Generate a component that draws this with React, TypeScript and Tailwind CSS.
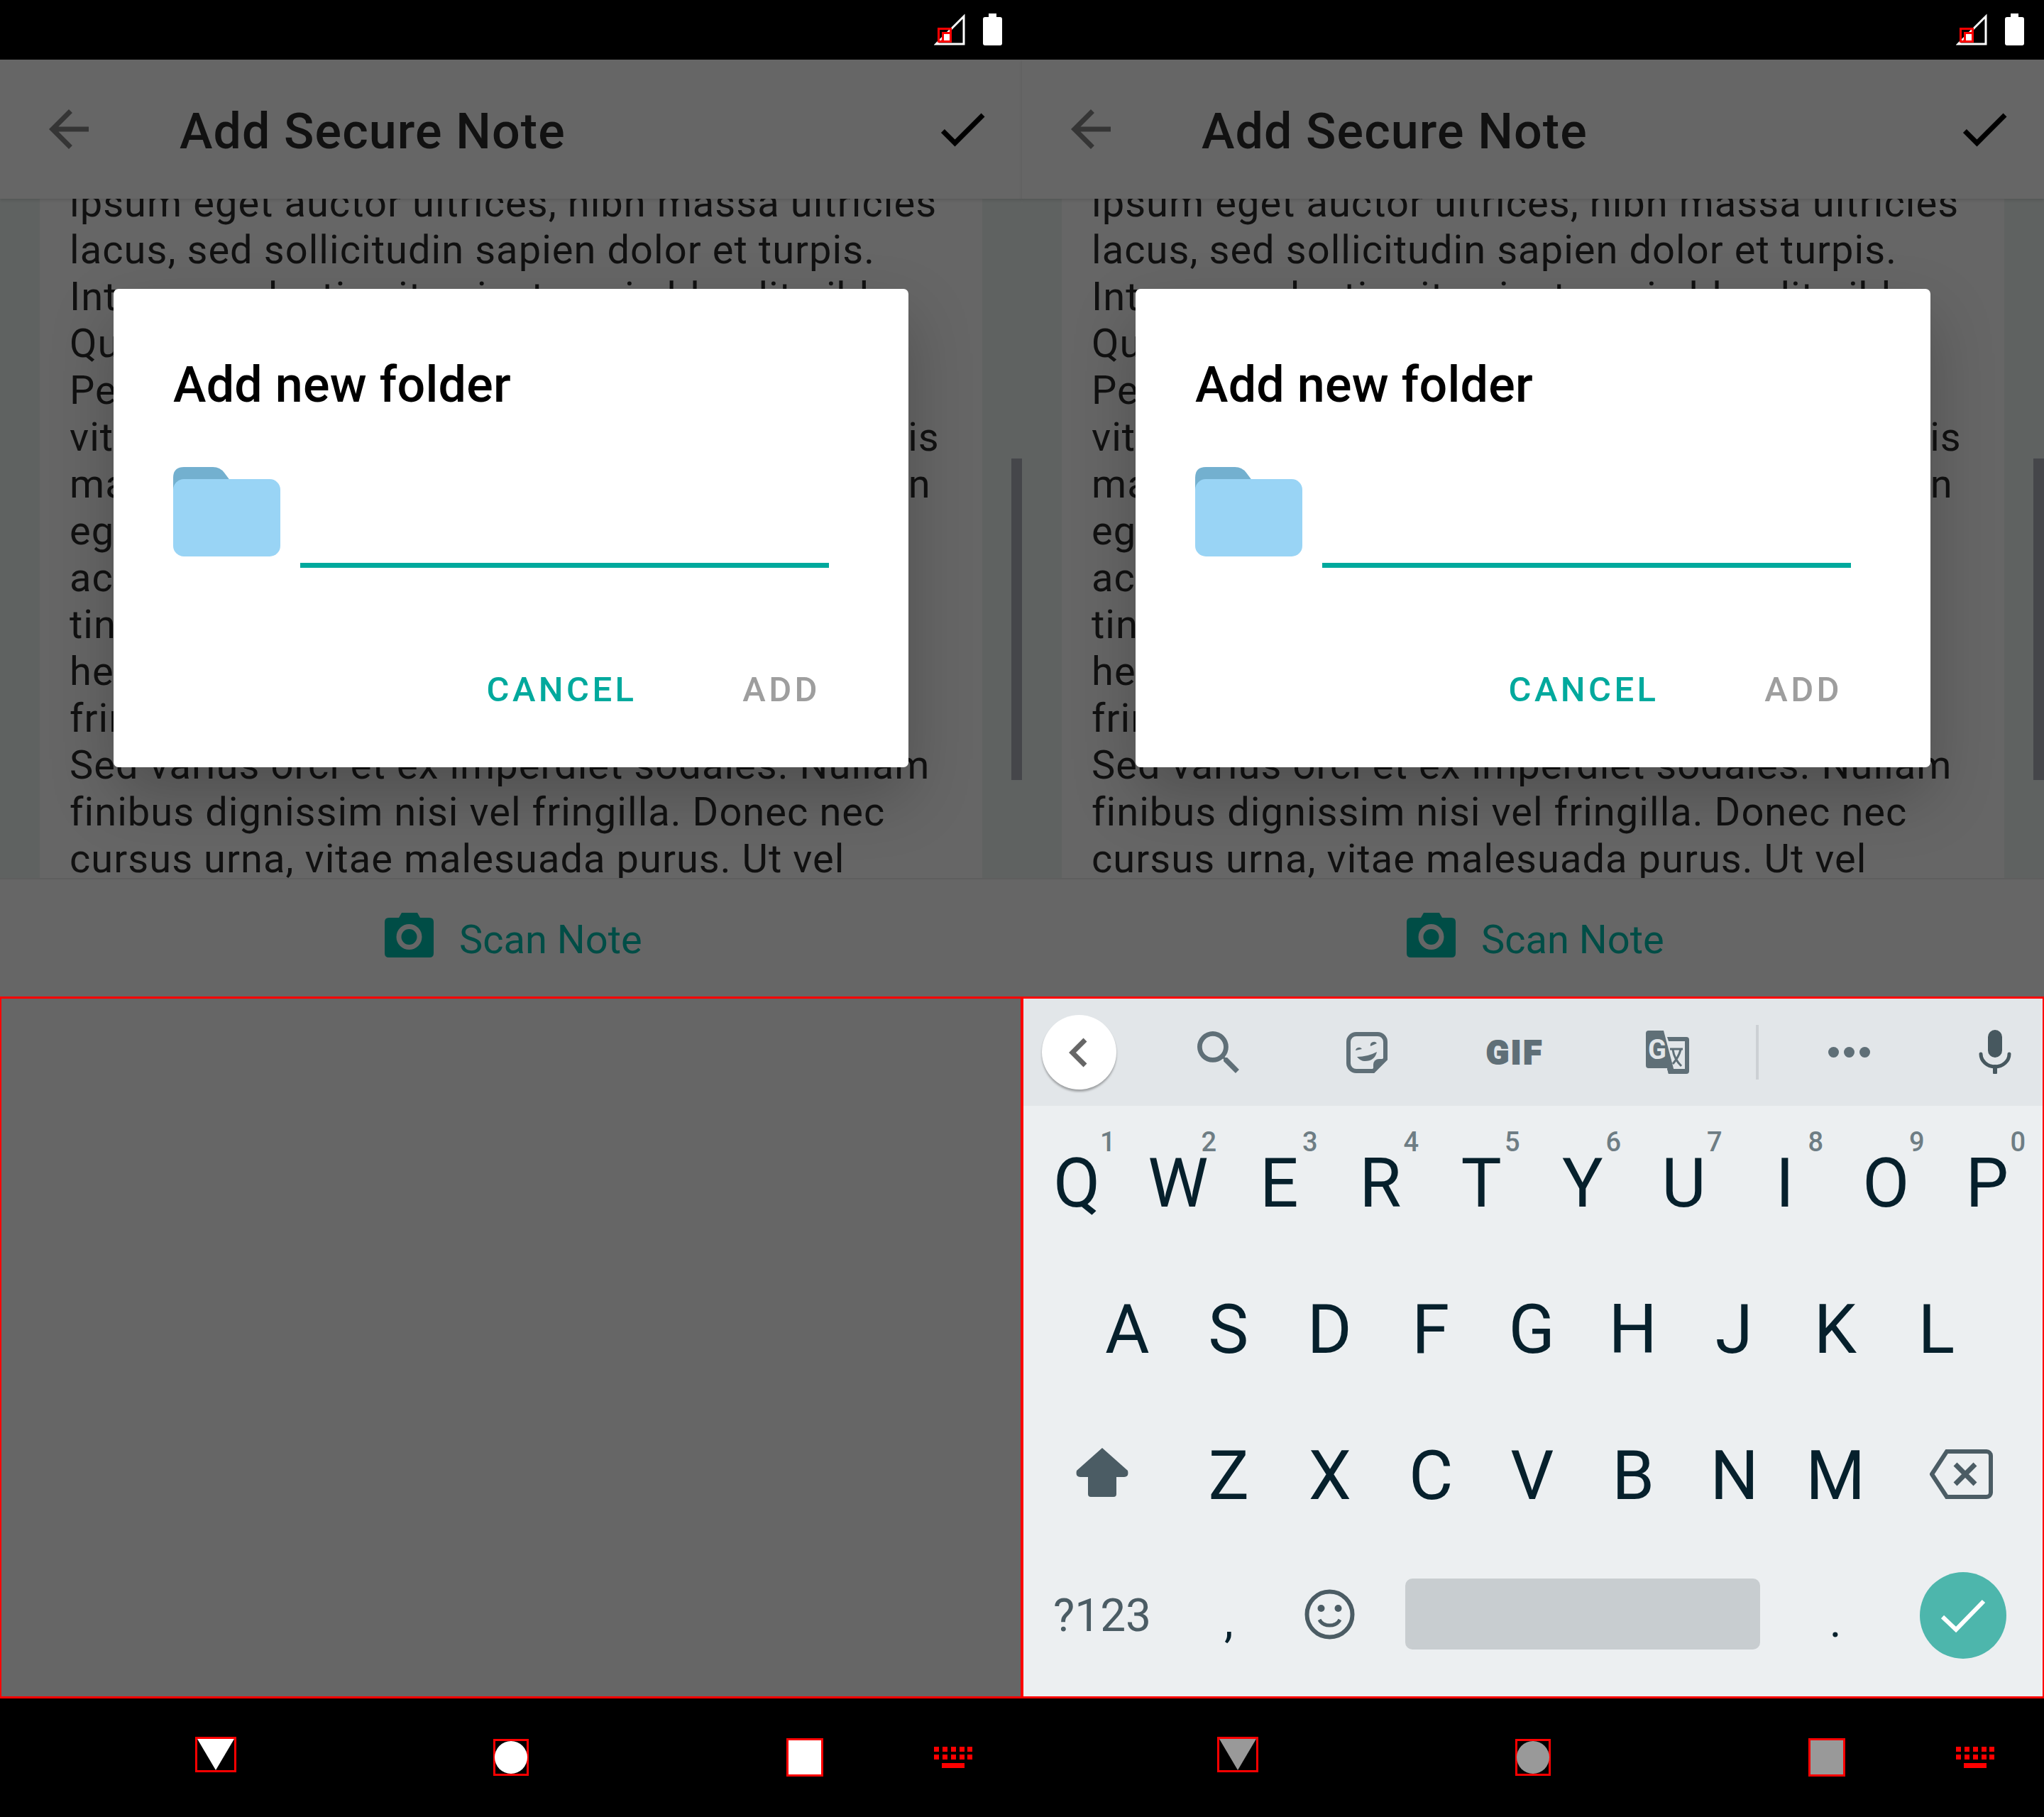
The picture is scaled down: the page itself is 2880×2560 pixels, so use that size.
const NOTE_TOP = [
  "ipsum eget auctor ultrices, nibh massa ultricies",
  "lacus, sed sollicitudin sapien dolor et turpis.",
  "Integer molestie vitae justo quis blandit nibh",
  "Quisque at tortor vel sem volutpat lobortis",
  "Pellentesque vel ligula a nunc ornare lacinia",
  "vitae sed ante tincidunt nulla mollis cursus cuis",
  "magna finibus vel lorem nec pharetra mauris in",
  "eget tempor lorem sed lacus aliquam",
  "ac sapien vehicula dictum dolor",
  "tincidunt sem at mauris ligula",
  "hendrerit nunc ac lacinia",
  "fringilla nec sapien",
  "Sed varius orci et ex imperdiet sodales. Nullam",
  "finibus dignissim nisi vel fringilla. Donec nec",
  "cursus urna, vitae malesuada purus. Ut vel",
];

const ROW_1 = ["Q", "W", "E", "R", "T", "Y", "U", "I", "O", "P"];
const HINTS = ["1", "2", "3", "4", "5", "6", "7", "8", "9", "0"];
const ROW_2 = ["A", "S", "D", "F", "G", "H", "J", "K", "L"];
const ROW_3 = ["Z", "X", "C", "V", "B", "N", "M"];

const StatusBar = () => (
  <div className="flex h-[84px] items-start bg-black pl-[1316px] pt-[19px]">
    <svg width="44" height="45" viewBox="0 0 44 45">
      <path d="M42 4V43H3Z" fill="none" stroke="#fff" strokeWidth="3" />
      <rect x="6.5" y="21.5" width="17" height="18" fill="none" stroke="#f00" strokeWidth="3" />
      <rect x="12.5" y="27.5" width="11" height="12" fill="#fff" stroke="#f00" strokeWidth="3" />
    </svg>
    <svg className="ml-[25px]" width="27" height="45" viewBox="0 0 27 45">
      <path d="M8 0H19V5H24Q27 5 27 8V42Q27 45 24 45H3Q0 45 0 42V8Q0 5 3 5H8Z" fill="#fff" />
    </svg>
  </div>
);

const AppBar = () => (
  <div className="z-10 flex h-[196px] items-center bg-[#666] pl-[55px] pr-[42px] shadow-[0_2px_4px_rgba(0,0,0,0.12)]">
    <svg width="84" height="84" viewBox="0 0 24 24" fill="#353535">
      <path d="M20 11H7.83l5.59-5.59L12 4l-8 8 8 8 1.41-1.41L7.83 13H20v-2z" />
    </svg>
    <div className="ml-[114px] mt-[5px] text-[70px] font-medium leading-none tracking-[1.1px] text-[#111]">
      Add Secure Note
    </div>
    <svg className="ml-auto" width="84" height="84" viewBox="0 0 24 24" fill="#000">
      <path d="M9 16.17L4.83 12l-1.42 1.41L9 19 21 7l-1.41-1.41z" />
    </svg>
  </div>
);

const NoteBody = () => (
  <div className="relative flex h-[957px] justify-center overflow-hidden bg-[#5f6261]">
    <div className="w-[1328px] overflow-hidden bg-[#666] pl-[42px]">
      <div className="-mt-[27px] text-[56px] leading-[66px] tracking-[1.05px] text-[#111]">
        {NOTE_TOP.map((line) => (
          <div className="whitespace-nowrap" key={line}>
            {line}
          </div>
        ))}
      </div>
    </div>
    <div className="absolute right-0 top-[366px] h-[453px] w-[15px] bg-[#45464a]" />
  </div>
);

const ScanBar = () => (
  <div className="flex h-[167px] items-start border-t-2 border-[#5e5e5e] bg-[#666] pl-[542px] pt-[47px]">
    <svg width="69" height="63" viewBox="0 0 69 63">
      <path
        d="M20 7 24 0H46L50 7H63Q69 7 69 13V57Q69 63 63 63H6Q0 63 0 57V13Q0 7 6 7Z"
        fill="#004d46"
      />
      <circle cx="34.5" cy="34" r="18" fill="#666" />
      <circle cx="34.5" cy="34" r="11" fill="#004d46" />
    </svg>
    <div className="ml-[36px] mt-[5px] text-[56px] leading-[66px] text-[#004d46]">Scan Note</div>
  </div>
);

const FolderDialog = () => (
  <div className="absolute left-[160px] top-[407px] z-20 h-[674px] w-[1120px] rounded-[7px] bg-white pl-[84px] pt-[94px] shadow-[0_40px_90px_rgba(0,0,0,0.22)]">
    <div className="text-[70px] font-medium leading-[82px] tracking-[0.25px] text-black">Add new folder</div>
    <div className="mt-[75px] flex">
      <svg width="151" height="126" viewBox="0 0 151 126">
        <path d="M0 30V15Q0 0 15 0H56Q66 0 72 8L84 24V40H0Z" fill="#73b0cf" />
        <rect y="17" width="151" height="109" rx="15" fill="#99d4f5" />
      </svg>
      <div className="ml-[28px] mt-[135px] h-[7px] w-[745px] bg-[#00a99d]" />
    </div>
    <div className="mt-[147px] flex justify-end gap-[149px] pr-[124px] text-[49px] font-medium leading-[50px] tracking-[4.4px]">
      <span className="text-[#00a99d]">CANCEL</span>
      <span className="text-[#9e9e9e]">ADD</span>
    </div>
  </div>
);

const SuggestionBar = () => (
  <div className="flex h-[151px] items-center bg-[#e2e6e9] pl-[26px]">
    <div className="flex h-[105px] w-[105px] items-center justify-center rounded-full bg-white shadow-[0_3px_3px_rgba(0,0,0,0.3)]">
      <svg className="-ml-[4px]" width="28" height="42" viewBox="0 0 28 42">
        <path d="M24 3 6 21 24 39" fill="none" stroke="#666" strokeWidth="7" />
      </svg>
    </div>
    <svg className="ml-[114px]" width="59" height="59" viewBox="3 3 17.5 17.5" fill="#5f6f77">
      <path d="M15.5 14h-.79l-.28-.27A6.47 6.47 0 0 0 16 9.5 6.5 6.5 0 1 0 9.5 16c1.61 0 3.09-.59 4.23-1.57l.27.28v.79l5 4.99L20.49 19l-4.99-5zm-6 0C7.01 14 5 11.99 5 9.5S7.01 5 9.5 5 14 7.01 14 9.5 11.99 14 9.5 14z" />
    </svg>
    <svg className="ml-[151px]" width="58" height="58" viewBox="0 0 58 58">
      <path
        d="M14 3H44A11 11 0 0 1 55 14V38L38 55H14A11 11 0 0 1 3 44V14A11 11 0 0 1 14 3Z"
        fill="none"
        stroke="#5f6f77"
        strokeWidth="6"
      />
      <path d="M38 55V46A8 8 0 0 1 46 38H55Z" fill="#5f6f77" />
      <path d="M13 26A5 5 0 0 1 22 24ZM34 20A5 5 0 0 1 43 16Z" fill="#5f6f77" />
      <path d="M15 35Q30 35 43 28Q40 41 26 41Q20 41 15 35Z" fill="#5f6f77" />
    </svg>
    <div className="ml-[139px] w-[80px] whitespace-nowrap text-center text-[47px] font-black leading-none tracking-[3px] text-[#5f6f77] [-webkit-text-stroke:2px_#5f6f77]">
      GIF
    </div>
    <svg className="ml-[145px]" width="61" height="61" viewBox="0 0 61 61">
      <path d="M30 9H57Q61 9 61 13V57Q61 61 57 61H32L30 54H55V15H32Z" fill="#5f6f77" />
      <path d="M4 0H25L41 61H32L30 53H4Q0 53 0 49V4Q0 0 4 0Z" fill="#5f6f77" />
      <text x="3" y="40" fill="#e2e6e9" fontSize="38" fontWeight="700" fontFamily="Roboto, sans-serif">
        G
      </text>
      <path d="M34 26H52M38 27Q40 40 50 50M49 27Q46 38 38 47" fill="none" stroke="#5f6f77" strokeWidth="3" />
    </svg>
    <div className="ml-[94px] h-[77px] w-[4px] bg-[#ccd0d4]" />
    <div className="ml-[98px] flex gap-[7px]">
      <div className="h-[15px] w-[15px] rounded-full bg-[#5f6f77]" />
      <div className="h-[15px] w-[15px] rounded-full bg-[#5f6f77]" />
      <div className="h-[15px] w-[15px] rounded-full bg-[#5f6f77]" />
    </div>
    <svg className="ml-[153px] -mt-[1px]" width="46" height="62" viewBox="0 0 46 62">
      <rect x="13" y="0" width="20" height="39" rx="10" fill="#47585f" />
      <path d="M3 34A20 18 0 0 0 43 34" fill="none" stroke="#47585f" strokeWidth="5" strokeLinecap="round" />
      <path d="M23 52V60" fill="none" stroke="#47585f" strokeWidth="6" strokeLinecap="round" />
    </svg>
  </div>
);

const Key = ({ label, hint }: { label: string; hint?: string }) => (
  <div className="relative flex w-[142.5px] items-center justify-center text-[96px] leading-none text-[#06202c]">
    {label}
    {hint ? (
      <span className="absolute right-[17px] top-[26px] text-[38px] font-medium leading-[38px] text-[#6e7d84]">
        {hint}
      </span>
    ) : null}
  </div>
);

const Keyboard = () => (
  <div className="h-full bg-[#eceff1]">
    <SuggestionBar />
    <div className="pl-[4px] pt-[6px]">
      <div className="flex h-[206px]">
        {ROW_1.map((k, i) => (
          <Key label={k} hint={HINTS[i]} key={k} />
        ))}
      </div>
      <div className="flex h-[206px] pl-[71px]">
        {ROW_2.map((k) => (
          <Key label={k} key={k} />
        ))}
      </div>
      <div className="flex h-[206px]">
        <div className="flex w-[214px] items-center justify-center">
          <svg className="-mt-[9px]" width="74" height="69" viewBox="0 0 74 69" fill="#4b5c64">
            <path d="M37 0 73 32Q75 41 68 41H57V65Q57 69 53 69H21Q17 69 17 65V41H6Q-1 41 1 32Z" />
          </svg>
        </div>
        {ROW_3.map((k) => (
          <Key label={k} key={k} />
        ))}
        <div className="flex w-[211px] items-center justify-center">
          <svg className="-mt-[4px]" width="89" height="70" viewBox="0 0 89 70">
            <path
              d="M24 3H80A6 6 0 0 1 86 9V61A6 6 0 0 1 80 67H24L3 35Z"
              fill="none"
              stroke="#4b5c64"
              strokeWidth="6"
            />
            <path d="M36 21 64 49M64 21 36 49" fill="none" stroke="#4b5c64" strokeWidth="7" />
          </svg>
        </div>
      </div>
      <div className="-mt-[2px] flex h-[190px] items-center">
        <div className="w-[214px] pt-[3px] text-center text-[64px] leading-none text-[#4b5c64]">?123</div>
        <div className="w-[142.5px] pt-[20px] text-center text-[64px] leading-none text-[#06202c]">,</div>
        <div className="flex w-[142.5px] justify-center">
          <svg className="-mt-[1px]" width="71" height="71" viewBox="0 0 71 71">
            <circle cx="35.5" cy="35.5" r="32" fill="none" stroke="#4b5c64" strokeWidth="6" />
            <circle cx="23.5" cy="27" r="5" fill="#4b5c64" />
            <circle cx="47.5" cy="27" r="5" fill="#4b5c64" />
            <path d="M21 43A16 14 0 0 0 50 43" fill="none" stroke="#4b5c64" strokeWidth="5" />
          </svg>
        </div>
        <div className="flex w-[570px] justify-center">
          <div className="-mt-[2px] h-[100px] w-[500px] rounded-[10px] bg-[#c8cdd0]" />
        </div>
        <div className="w-[142.5px] pt-[20px] text-center text-[64px] leading-none text-[#06202c]">.</div>
        <div className="flex w-[217px] justify-center">
          <div className="mt-[2px] flex h-[122px] w-[122px] items-center justify-center rounded-full bg-[#4db6ac]">
            <svg width="64" height="48" viewBox="0 0 64 48">
              <path d="M3 26 22 44 61 4" fill="none" stroke="#fff" strokeWidth="6" />
            </svg>
          </div>
        </div>
      </div>
    </div>
  </div>
);

const NavBar = ({ fill }: { fill: string }) => (
  <div className="flex h-[167px] items-start bg-black pl-[275px]">
    <svg className="mt-[54px]" width="58" height="50" viewBox="0 0 58 50">
      <rect x="1.5" y="1.5" width="55" height="47" fill="none" stroke="#f00" strokeWidth="3" />
      <path d="M3 3H55L29 47Z" fill={fill} />
    </svg>
    <svg className="ml-[362px] mt-[57px]" width="50" height="52" viewBox="0 0 50 52">
      <rect x="1.5" y="1.5" width="47" height="49" fill="none" stroke="#f00" strokeWidth="3" />
      <circle cx="25" cy="26" r="23" fill={fill} />
    </svg>
    <svg className="ml-[363px] mt-[56px]" width="52" height="54" viewBox="0 0 52 54">
      <rect x="1.5" y="1.5" width="49" height="51" fill={fill} stroke="#f00" strokeWidth="3" />
    </svg>
    <svg className="ml-[156px] mt-[68px]" width="54" height="30" viewBox="0 0 54 30" fill="#f00">
      <path d="M0 0h7v7H0zM12 0h7v7h-7zM24 0h7v7h-7zM36 0h7v7h-7zM47 0h7v7h-7zM0 11h7v7H0zM12 11h7v7h-7zM24 11h7v7h-7zM36 11h7v7h-7zM47 11h7v7h-7zM11 23h32v7H11z" />
    </svg>
  </div>
);

const Panel = ({ keyboard }: { keyboard?: boolean }) => (
  <div className="relative flex h-[2560px] w-[1440px] flex-col">
    <StatusBar />
    <AppBar />
    <NoteBody />
    <ScanBar />
    <div className="h-[989px] overflow-hidden border-x-2 border-y-[3px] border-[#f00] bg-[#666]">
      {keyboard ? <Keyboard /> : null}
    </div>
    <NavBar fill={keyboard ? "#999" : "#fff"} />
    <FolderDialog />
  </div>
);

const App = () => {
  return (
    <div className="flex w-[2880px] font-[Roboto,sans-serif]">
      <Panel />
      <Panel keyboard />
    </div>
  );
};

export default App;
